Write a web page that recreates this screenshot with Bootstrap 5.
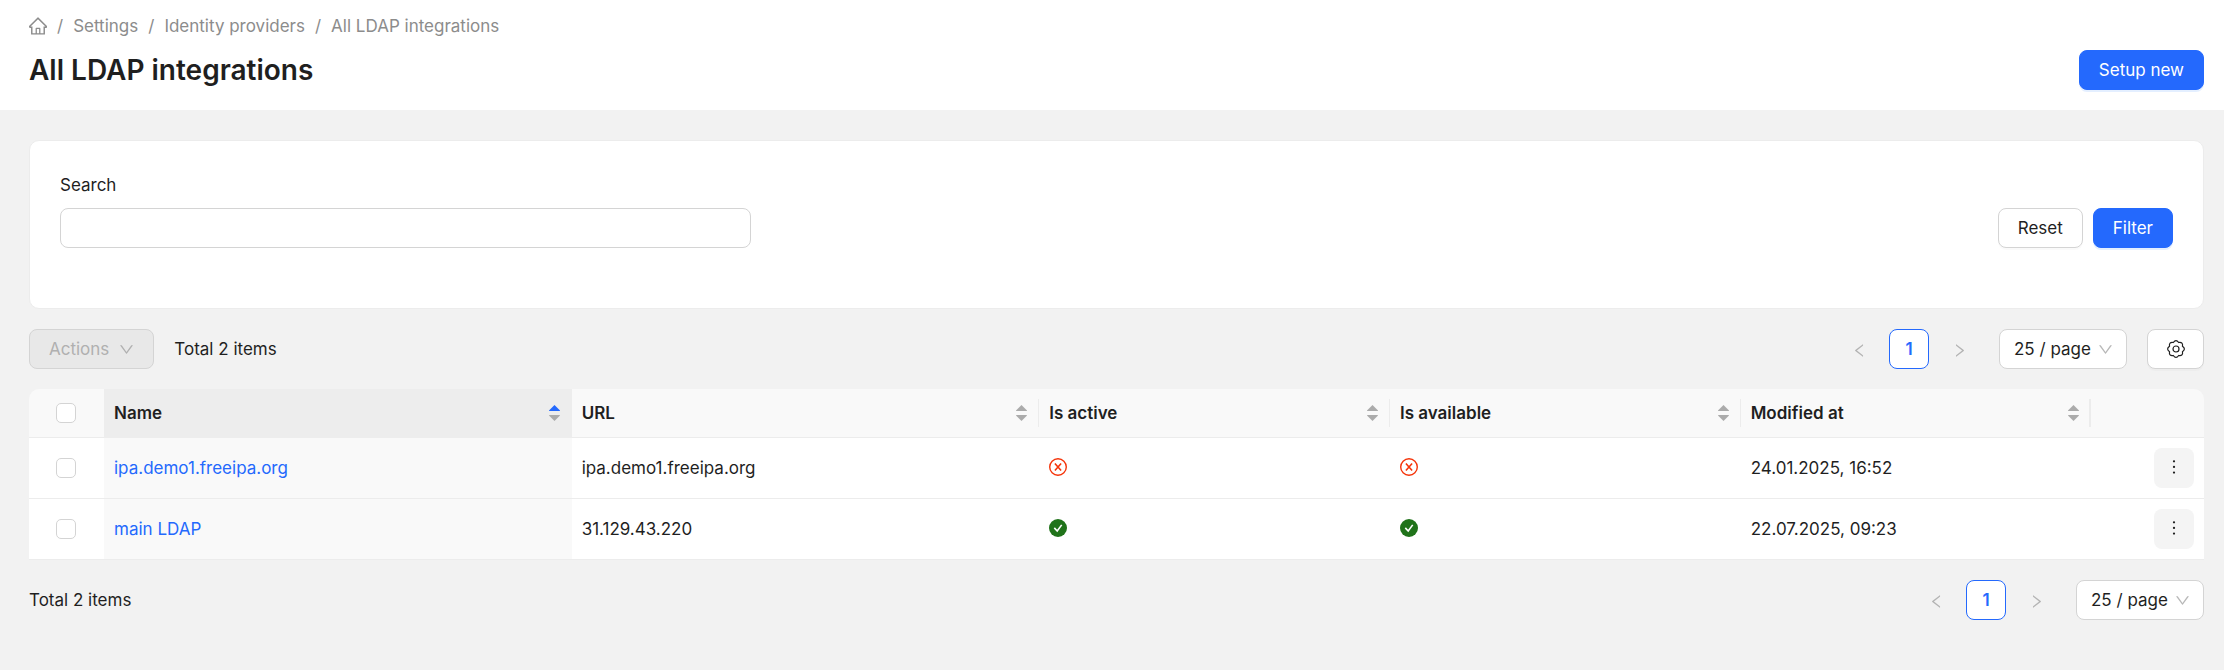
<!DOCTYPE html>
<html lang="en">
<head>
<meta charset="utf-8">
<meta name="viewport" content="width=device-width, initial-scale=1">
<title>All LDAP integrations</title>
<link rel="stylesheet" href="https://cdn.jsdelivr.net/npm/bootstrap@5.3.0/dist/css/bootstrap.min.css">
<style>
  :root { --ink: #1f1f1f; --brand: #2469fd; --line: #ececec; --edge: #d4d4d4; --mute: #8c8c8c; }
  body { background: #f2f2f2; color: var(--ink); font: 400 17px/28px Inter, "Liberation Sans", sans-serif; }
  svg { fill: currentColor; display: block; flex: none; }
  .page-x { padding-left: 29px; padding-right: 20px; }
  .page-top { padding-top: 12px; padding-bottom: 20px; }
  .crumbs { --bs-breadcrumb-divider-color: var(--mute); --bs-breadcrumb-item-padding-x: 10px; color: var(--mute); }
  .crumbs a, .crumbs .breadcrumb-item.active { color: var(--mute); text-decoration: none; }
  .title-row { margin-top: 10px; }
  .page-title { font-size: 28px; line-height: 40px; font-weight: 600; }
  .ctl { height: 40px; border-radius: 8px; font-size: 17px; line-height: 28px; padding: 5px 19px; }
  .ctl-main { --bs-btn-bg: var(--brand); --bs-btn-border-color: var(--brand); --bs-btn-color: #fff; --bs-btn-hover-bg: #4c88ff; --bs-btn-hover-color: #fff; box-shadow: 0 2px 0 #e4efff; }
  .ctl-plain { --bs-btn-bg: #fff; --bs-btn-border-color: var(--edge); --bs-btn-color: var(--ink); --bs-btn-hover-bg: #fff; --bs-btn-hover-border-color: var(--brand); box-shadow: 0 2px 0 #00000005; }
  .ctl-off { --bs-btn-disabled-bg: #e8e8e8; --bs-btn-disabled-border-color: var(--edge); --bs-btn-disabled-color: #b0b0b0; --bs-btn-disabled-opacity: 1; }
  .content { padding-top: 30px; }
  .filter-card { border: 1px solid var(--line); border-radius: 10px; padding: 30px 30px 60px; }
  .filter-field { flex: 0 1 691px; }
  .filter-field label { margin-bottom: 9px; }
  .filter-field input { border-color: var(--edge); }
  .list-bar { padding: 20px 0; }
  .list-tools { gap: 20px; }
  .total { margin-left: 20px; }
  .gear-btn { width: 57px; }
  .pager-set { gap: 10px; }
  .pager-btn { width: 40px; height: 40px; padding: 2px 0 0; border: 0; background: none; color: #b4b4b4; display: grid; place-items: center; }
  .pager-now { width: 40px; height: 40px; border: 1px solid var(--brand); border-radius: 8px; background: #fff; color: var(--brand); font-weight: 600; text-align: center; line-height: 38px; text-decoration: none; }
  .page-size { width: 128px; padding: 5px 14px; border-color: var(--edge); color: var(--ink); background: #fff url("data:image/svg+xml,%3Csvg xmlns='http://www.w3.org/2000/svg' viewBox='64 64 896 896' fill='%23b8b8b8'%3E%3Cpath d='M884 256h-75c-5.1 0-9.9 2.5-12.9 6.6L512 654.2 227.9 262.6c-3-4.1-7.8-6.6-12.9-6.6h-75c-6.5 0-10.3 7.4-6.5 12.7l352.6 486.1c12.8 17.6 39 17.6 51.7 0l352.6-486.1c3.9-5.3.1-12.7-6.4-12.7z'/%3E%3C/svg%3E") no-repeat right 13px center / 15px; }
  .items { table-layout: fixed; border-collapse: separate; border-spacing: 0; width: 100%; }
  .items th, .items td { padding: 10px; border-bottom: 1px solid var(--line); background: #fff; }
  .items th { background: #f9f9f9; font-weight: 600; }
  .items thead th:first-child { border-top-left-radius: 10px; }
  .items thead td:last-child { border-top-right-radius: 10px; background: #f9f9f9; }
  .items th.sorted { background: #ededed; border-bottom-color: #ededed; }
  .items td.sorted { background: #f9f9f9; }
  .items th:first-child, .items td:first-child { padding-right: 12px; }
  .items tbody td { height: 61px; }
  .items td svg { margin-bottom: 2px; }
  .w-check { width: 75px; } .w-wide { width: 21.5%; } .w-mid { width: 16.125%; }
  .items th.rule { background: #f9f9f9 linear-gradient(var(--line), var(--line)) no-repeat right center / 1px 28px; }
  .items th.rule-bold { background-size: 2px 28px; }
  .sorter { border: 0; background: none; padding: 0; color: #ababab; margin-right: 2px; gap: 4px; }
  .sorter .on { color: var(--brand); }
  .tick { width: 20px; height: 20px; margin: 0; border-color: var(--edge); border-radius: 5px !important; }
  .items a { color: var(--brand); text-decoration: none; }
  .more-btn { width: 40px; height: 40px; border: 0; border-radius: 8px; background: #f4f4f4; color: var(--ink); padding: 0; display: grid; place-items: center; }
  .no { color: #f5350b; } .yes { color: #20731a; }
</style>
<script src="https://cdn.jsdelivr.net/npm/bootstrap@5.3.0/dist/js/bootstrap.bundle.min.js"></script>
</head>
<body>
<svg class="d-none" aria-hidden="true">
  <symbol id="i-home" viewBox="64 64 896 896"><path d="M946.5 505L560.1 118.8l-25.9-25.9a31.5 31.5 0 00-44.4 0L77.5 505a63.9 63.9 0 00-18.8 46c.4 35.2 29.7 63.3 64.9 63.3h42.5V940h691.8V614.3h43.4c17.1 0 33.2-6.7 45.3-18.8a63.6 63.6 0 0018.7-45.3c0-17-6.7-33.1-18.8-45.2zM568 868H456V664h112v204zm217.9-325.7V868H632V640c0-22.1-17.9-40-40-40H432c-22.1 0-40 17.9-40 40v228H238.1V542.3h-96l370-369.7 23.1 23.1L882 542.3h-96.1z"/></symbol>
  <symbol id="i-down" viewBox="64 64 896 896"><path d="M884 256h-75c-5.1 0-9.9 2.5-12.9 6.6L512 654.2 227.9 262.6c-3-4.1-7.8-6.6-12.9-6.6h-75c-6.5 0-10.3 7.4-6.5 12.7l352.6 486.1c12.8 17.6 39 17.6 51.7 0l352.6-486.1c3.9-5.3.1-12.7-6.4-12.7z"/></symbol>
  <symbol id="i-left" viewBox="64 64 896 896"><path d="M724 218.3V141c0-6.7-7.7-10.4-12.9-6.3L260.3 486.8a31.86 31.86 0 000 50.3l450.8 352.1c5.3 4.1 12.9.4 12.9-6.3v-77.3c0-4.9-2.3-9.6-6.1-12.6l-360-281 360-281.1c3.8-3 6.1-7.7 6.1-12.6z"/></symbol>
  <symbol id="i-right" viewBox="64 64 896 896"><path d="M765.7 486.8L314.9 134.7A7.97 7.97 0 00302 141v77.3c0 4.9 2.3 9.6 6.1 12.6l360 281.1-360 281.1c-3.9 3-6.1 7.7-6.1 12.6V883c0 6.7 7.7 10.4 12.9 6.3l450.8-352.1a31.96 31.96 0 000-50.4z"/></symbol>
  <symbol id="i-more" viewBox="64 64 896 896"><path d="M456 231a56 56 0 10112 0 56 56 0 10-112 0zm0 280a56 56 0 10112 0 56 56 0 10-112 0zm0 280a56 56 0 10112 0 56 56 0 10-112 0z"/></symbol>
  <symbol id="i-sort-up" viewBox="0 0 11 6"><path d="M5.5 0 11 5.400Q11 6 10.500 6H.5Q0 6 0 5.400Z"/></symbol>
  <symbol id="i-sort-down" viewBox="0 0 11 6"><path d="M5.500 6 11 .6Q11 0 10.500 0H.5Q0 0 0 .6Z"/></symbol>
  <symbol id="i-no" viewBox="0 0 18 18"><circle cx="9" cy="9" r="8.300" fill="none" stroke="currentColor" stroke-width="1.400"/><path d="M5.900 5.500 12.100 12.500M12.100 5.500 5.900 12.500" fill="none" stroke="currentColor" stroke-width="1.600"/></symbol>
  <symbol id="i-yes" viewBox="0 0 18 18"><circle cx="9" cy="9" r="9"/><path d="M5.300 8.900 8.200 12 12.700 5.900" fill="none" stroke="#fff" stroke-width="1.600"/></symbol>
  <symbol id="i-gear" viewBox="0 0 18 18"><g fill="none" stroke="currentColor" stroke-width="1.200"><circle cx="9" cy="9" r="3"/><path d="M6.320 2.530Q9-1.300 11.680 2.530Q16.280 1.720 15.470 6.320Q19.300 9 15.470 11.680Q16.280 16.280 11.680 15.470Q9 19.300 6.320 15.470Q1.720 16.280 2.530 11.680Q-1.300 9 2.530 6.320Q1.720 1.720 6.320 2.530Z"/></g></symbol>
</svg>

<header class="page-top page-x bg-white">
  <nav aria-label="breadcrumb">
    <ol class="breadcrumb crumbs mb-0">
      <li class="breadcrumb-item d-flex align-items-center"><a href="#" aria-label="Home"><svg width="18" height="18"><use href="#i-home"/></svg></a></li>
      <li class="breadcrumb-item"><a href="#">Settings</a></li>
      <li class="breadcrumb-item"><a href="#">Identity providers</a></li>
      <li class="breadcrumb-item active" aria-current="page">All LDAP integrations</li>
    </ol>
  </nav>
  <div class="title-row d-flex justify-content-between align-items-center">
    <h1 class="page-title mb-0">All LDAP integrations</h1>
    <button type="button" class="btn ctl ctl-main">Setup new</button>
  </div>
</header>

<main class="page-x content">
  <form class="filter-card bg-white d-flex justify-content-between align-items-end">
    <div class="filter-field">
      <label for="search" class="d-block">Search</label>
      <input id="search" type="text" class="form-control ctl">
    </div>
    <div class="d-flex pager-set">
      <button type="reset" class="btn ctl ctl-plain">Reset</button>
      <button type="button" class="btn ctl ctl-main">Filter</button>
    </div>
  </form>

  <div class="list-bar d-flex justify-content-between align-items-center">
    <div class="d-flex align-items-center">
      <button type="button" class="btn ctl ctl-off d-flex align-items-center pager-set" disabled>Actions <svg width="15" height="15"><use href="#i-down"/></svg></button>
      <span class="total">Total 2 items</span>
    </div>
    <div class="d-flex align-items-center list-tools">
      <nav class="d-flex pager-set" aria-label="Pages">
        <button type="button" class="pager-btn" aria-label="Previous page"><svg width="15" height="15"><use href="#i-left"/></svg></button>
        <a class="pager-now" href="#">1</a>
        <button type="button" class="pager-btn" aria-label="Next page"><svg width="15" height="15"><use href="#i-right"/></svg></button>
      </nav>
      <select class="form-select ctl page-size" aria-label="Page size"><option>25 / page</option></select>
      <button type="button" class="btn ctl ctl-plain gear-btn" aria-label="Table settings"><svg width="18" height="18"><use href="#i-gear"/></svg></button>
    </div>
  </div>

  <table class="items">
    <colgroup><col class="w-check"><col class="w-wide"><col class="w-wide"><col class="w-mid"><col class="w-mid"><col class="w-mid"><col></colgroup>
    <thead>
      <tr>
        <th><input type="checkbox" class="form-check-input tick d-block mx-auto" aria-label="Select all"></th>
        <th class="sorted"><div class="d-flex justify-content-between align-items-center">Name <button type="button" class="sorter d-grid" aria-label="Sort by name"><svg class="on" width="11" height="6"><use href="#i-sort-up"/></svg><svg width="11" height="6"><use href="#i-sort-down"/></svg></button></div></th>
        <th class="rule"><div class="d-flex justify-content-between align-items-center">URL <button type="button" class="sorter d-grid" aria-label="Sort by URL"><svg width="11" height="6"><use href="#i-sort-up"/></svg><svg width="11" height="6"><use href="#i-sort-down"/></svg></button></div></th>
        <th class="rule"><div class="d-flex justify-content-between align-items-center">Is active <button type="button" class="sorter d-grid" aria-label="Sort by active"><svg width="11" height="6"><use href="#i-sort-up"/></svg><svg width="11" height="6"><use href="#i-sort-down"/></svg></button></div></th>
        <th class="rule"><div class="d-flex justify-content-between align-items-center">Is available <button type="button" class="sorter d-grid" aria-label="Sort by available"><svg width="11" height="6"><use href="#i-sort-up"/></svg><svg width="11" height="6"><use href="#i-sort-down"/></svg></button></div></th>
        <th class="rule rule-bold"><div class="d-flex justify-content-between align-items-center">Modified at <button type="button" class="sorter d-grid" aria-label="Sort by modified"><svg width="11" height="6"><use href="#i-sort-up"/></svg><svg width="11" height="6"><use href="#i-sort-down"/></svg></button></div></th>
        <td></td>
      </tr>
    </thead>
    <tbody>
      <tr>
        <td><input type="checkbox" class="form-check-input tick d-block mx-auto" aria-label="Select ipa.demo1.freeipa.org"></td>
        <td class="sorted"><a href="#">ipa.demo1.freeipa.org</a></td>
        <td>ipa.demo1.freeipa.org</td>
        <td><svg class="no" width="18" height="18" role="img" aria-label="No"><use href="#i-no"/></svg></td>
        <td><svg class="no" width="18" height="18" role="img" aria-label="No"><use href="#i-no"/></svg></td>
        <td>24.01.2025, 16:52</td>
        <td><button type="button" class="more-btn ms-auto" aria-label="More"><svg width="18" height="18"><use href="#i-more"/></svg></button></td>
      </tr>
      <tr>
        <td><input type="checkbox" class="form-check-input tick d-block mx-auto" aria-label="Select main LDAP"></td>
        <td class="sorted"><a href="#">main LDAP</a></td>
        <td>31.129.43.220</td>
        <td><svg class="yes" width="18" height="18" role="img" aria-label="Yes"><use href="#i-yes"/></svg></td>
        <td><svg class="yes" width="18" height="18" role="img" aria-label="Yes"><use href="#i-yes"/></svg></td>
        <td>22.07.2025, 09:23</td>
        <td><button type="button" class="more-btn ms-auto" aria-label="More"><svg width="18" height="18"><use href="#i-more"/></svg></button></td>
      </tr>
    </tbody>
  </table>

  <div class="list-bar d-flex justify-content-between align-items-center">
    <span>Total 2 items</span>
    <div class="d-flex align-items-center list-tools">
      <nav class="d-flex pager-set" aria-label="Pages, bottom">
        <button type="button" class="pager-btn" aria-label="Previous page"><svg width="15" height="15"><use href="#i-left"/></svg></button>
        <a class="pager-now" href="#">1</a>
        <button type="button" class="pager-btn" aria-label="Next page"><svg width="15" height="15"><use href="#i-right"/></svg></button>
      </nav>
      <select class="form-select ctl page-size" aria-label="Page size"><option>25 / page</option></select>
    </div>
  </div>
</main>
</body>
</html>
